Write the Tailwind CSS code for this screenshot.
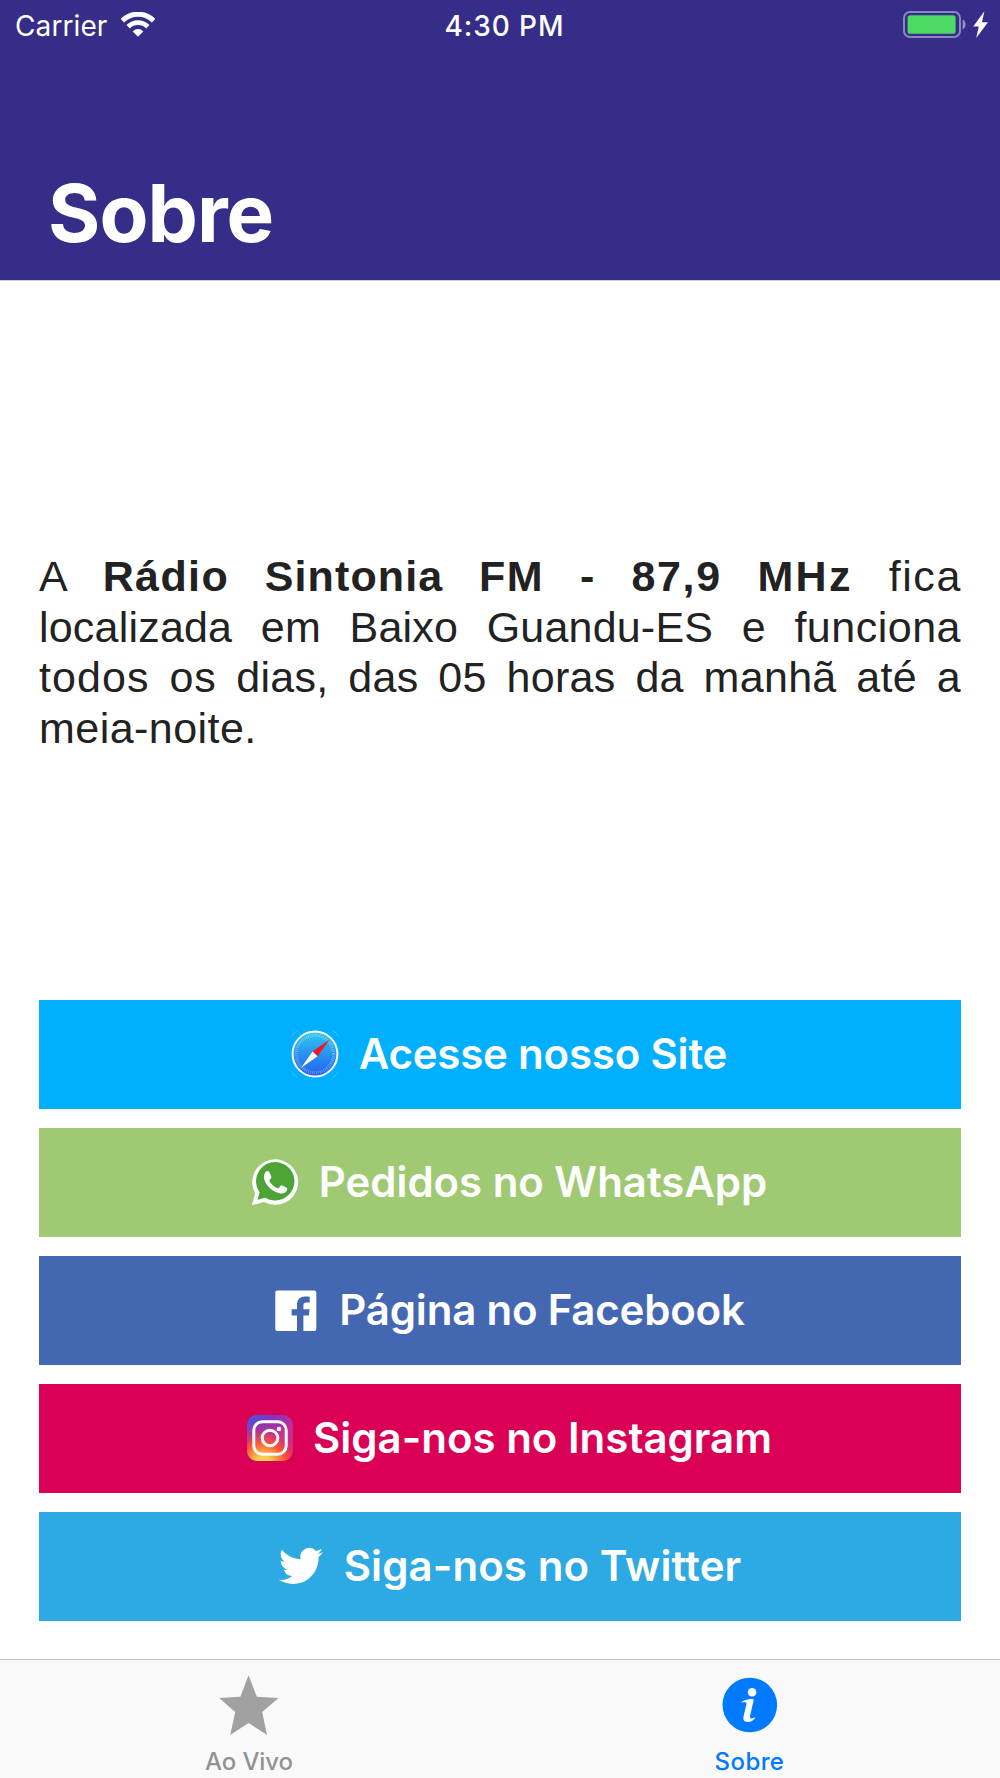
<!DOCTYPE html>
<html lang="pt-BR">
<head>
  <meta charset="UTF-8">
  <meta name="viewport" content="width=device-width, initial-scale=1.0">
  <script src="https://cdn.jsdelivr.net/npm/@tailwindcss/browser@4"></script>
  <title>Sobre</title>
</head>
<body class="flex flex-col w-[1000px] h-[1778px] overflow-hidden bg-white font-['Inter',sans-serif] select-none">

  <header class="flex flex-col justify-between h-[281px] pt-[6px] pb-[19px] bg-[#352d87] border-b border-[#cdcbe2] text-white shrink-0">
    <!-- Status bar -->
    <div class="grid grid-cols-3 items-center h-10 pl-[15px] pr-3 text-[28px] leading-10">
      <div class="flex items-center gap-[14px]">
        <span class="tracking-[0.1px]">Carrier</span>
        <svg class="w-[34px] h-[25px] -mt-[3px]" viewBox="0 0 34 25" fill="none" stroke="#fff">
          <path d="M1.4 8.6a22.2 22.2 0 0 1 31.2 0" stroke-width="5"/>
          <path d="M7.2 14.7a14 14 0 0 1 19.6 0" stroke-width="4.8"/>
          <path d="M11.7 19.4a7.2 7.2 0 0 1 10.6 0L17 24.8z" fill="#fff" stroke="none"/>
        </svg>
      </div>
      <span class="pl-[6px] text-center font-medium tracking-[0.9px]">4:30 PM</span>
      <div class="flex justify-end items-center gap-[7px] -mt-[3px]">
        <svg class="w-[63px] h-[27px]" viewBox="0 0 63 27">
          <rect x="1" y="1" width="56" height="25" rx="6" fill="none" stroke="#8b86bb" stroke-width="2"/>
          <rect x="4.600" y="4.200" width="48" height="18.600" rx="2.600" fill="#4cd964"/>
          <path d="M59.700 8.600c3.700 1.800 3.700 8 0 9.800z" fill="#9a96c3"/>
        </svg>
        <svg class="w-[15px] h-[27px]" viewBox="0 0 15 27" fill="#fff">
          <path d="M11.400.2.200 15.400h5.600L3.200 26.900 15 11.200H9z"/>
        </svg>
      </div>
    </div>
    <h1 class="pl-[48px] text-[80px] leading-[96px] font-bold tracking-[-1px]">Sobre</h1>
  </header>

  <main class="flex flex-col flex-1 px-[39px]">
    <div class="mt-[270px] h-[202px] text-[43px] leading-[50.5px] text-[#222] font-['Liberation_Sans',Arial,sans-serif] whitespace-nowrap">
      <p class="-mr-[1px] [text-align-last:justify] tracking-[1.6px]">A <b><span class="tracking-[1.4px]">Rádio</span> <span class="tracking-[1.1px]">Sintonia</span> FM - 87,9 <span class="tracking-[2.4px]">MHz</span></b> fica</p>
      <p class="[text-align-last:justify] tracking-[0.2px]">localizada em Baixo Guandu-ES e <span class="tracking-[0.5px]">funciona</span></p>
      <p class="[text-align-last:justify] tracking-[0.3px]"><span class="tracking-[1.1px]">todos</span> <span class="tracking-[0.8px]">os</span> dias, das 05 horas da manhã até a</p>
      <p class="tracking-[0.45px]">meia-noite.</p>
    </div>

    <div class="flex flex-col gap-[19px] mt-[247px] text-[42px] leading-[52px] font-semibold text-white">
      <a class="flex justify-center items-center gap-5 h-[109px] pl-[18px] pb-[2px] bg-[#00b0ff]">
        <svg class="size-12" viewBox="0 0 48 48">
          <defs>
            <linearGradient id="safari" x1="0" y1="0" x2="0" y2="1">
              <stop offset="0" stop-color="#2ccdf2"/>
              <stop offset=".5" stop-color="#2a92ee"/>
              <stop offset="1" stop-color="#2360ee"/>
            </linearGradient>
          </defs>
          <g fill="none" stroke="#fff" stroke-opacity=".3" stroke-width=".8">
            <path d="M.5 6.500q2-4 6-6M41.500.5q4 2 6 6M47.500 41.500q-2 4-6 6M6.500 47.500q-4-2-6-6"/>
          </g>
          <circle cx="24" cy="24" r="22.400" fill="url(#safari)" stroke="#fff" stroke-width="2"/>
          <circle cx="24" cy="24" r="18.600" fill="none" stroke="#fff" stroke-opacity=".4" stroke-width="3" stroke-dasharray=".7 1.250"/>
          <path d="M38.600 9.400 21.600 21.400l4.900 4.900z" fill="#f8141c"/>
          <path d="M10 38 21.600 21.400l4.900 4.900z" fill="#fff"/>
        </svg>
        <span class="tracking-[-0.2px]">Acesse nosso Site</span>
      </a>
      <a class="flex justify-center items-center gap-5 h-[109px] pl-[18px] pb-[2px] bg-[#9fc973]">
        <svg class="size-12" viewBox="0 0 48 48">
          <path d="M.9 47.200 4.200 35.300A23 22.700 0 1 1 13 43.900z" fill="#fff"/>
          <path d="M6.500 41.700 8.600 34.400A19.200 19.200 0 1 1 14.300 39.700z" fill="#4ca436"/>
          <path d="M14.400 14.300c1.200-1.500 3.200-1.600 4-.2l1.900 4.400c.4 1-.1 1.800-1.600 3.400-.5.6-.4 1.100.1 1.900 1.800 3 4.300 5 7.400 6.300.8.4 1.400.2 1.900-.4 1.700-2.100 2.100-2.600 3.100-2.200l4.200 2c1 .5 1 1 .8 2-.7 3.200-4 4.400-6.800 3.900-7.700-1.500-13.900-7.400-16-13.500-.9-2.800-.4-5.700 1-7.600z" fill="#fff"/>
        </svg>
        <span class="tracking-[-0.05px]">Pedidos no WhatsApp</span>
      </a>
      <a class="flex justify-center items-center gap-[19px] h-[109px] pl-[17px] pb-[2px] bg-[#4467b2]">
        <svg class="size-12" viewBox="0 0 48 48">
          <path d="M5.300 4.500h37a2 2 0 0 1 2 2v36.500a2 2 0 0 1-2 2H31.400V29.500h5.400l.8-6.200h-6.200v-3.800c0-2 .7-3 3.200-3h3.100V10.700c-1-.2-2.800-.3-4.600-.3-4.800 0-8.100 2.900-8.100 8.300v4.600h-5.400v6.200H25V45H5.300a2 2 0 0 1-2-2v-36.500a2 2 0 0 1 2-2z" fill="#fff"/>
        </svg>
        <span class="tracking-[-0.2px]">Página no Facebook</span>
      </a>
      <a class="flex justify-center items-center gap-[19px] h-[109px] pl-[18px] pb-[2px] bg-[#d90056]">
        <svg class="size-12" viewBox="0 0 48 48">
          <defs>
            <linearGradient id="insta-base" x1="0" y1="0" x2="1" y2="1">
              <stop offset="0" stop-color="#3f5fe0"/>
              <stop offset=".3" stop-color="#8035c0"/>
              <stop offset=".6" stop-color="#c32c98"/>
              <stop offset="1" stop-color="#e01f65"/>
            </linearGradient>
            <radialGradient id="insta-glow" cx=".35" cy="1.080" r=".95">
              <stop offset="0" stop-color="#ffe070"/>
              <stop offset=".2" stop-color="#fdc84f"/>
              <stop offset=".5" stop-color="#fb5a36"/>
              <stop offset=".75" stop-color="#e0336c" stop-opacity=".6"/>
              <stop offset="1" stop-color="#c0309a" stop-opacity="0"/>
            </radialGradient>
          </defs>
          <rect x="1" y="1" width="46" height="46" rx="10" fill="url(#insta-base)"/>
          <rect x="1" y="1" width="46" height="46" rx="10" fill="url(#insta-glow)"/>
          <g fill="none" stroke="#fff" stroke-width="3">
            <rect x="7.800" y="7.800" width="32.400" height="32.400" rx="8.500"/>
            <circle cx="24" cy="24" r="7.800"/>
          </g>
          <circle cx="33" cy="15" r="2.300" fill="#fff"/>
        </svg>
        <span>Siga-nos no Instagram</span>
      </a>
      <a class="flex justify-center items-center gap-[19px] h-[109px] pl-[18px] pb-[2px] bg-[#2da9e3]">
        <svg class="size-12" viewBox="0 0 48 48">
          <path transform="translate(1.900 1.900) scale(1.840)" d="M23.953 4.570a10 10 0 0 1-2.825.775 4.958 4.958 0 0 0 2.163-2.723c-.951.555-2.005.959-3.127 1.184a4.920 4.920 0 0 0-8.384 4.482C7.690 8.095 4.067 6.130 1.640 3.162a4.822 4.822 0 0 0-.666 2.475c0 1.710.87 3.213 2.188 4.096a4.904 4.904 0 0 1-2.228-.616v.06a4.923 4.923 0 0 0 3.946 4.827 4.996 4.996 0 0 1-2.212.085 4.936 4.936 0 0 0 4.604 3.417 9.867 9.867 0 0 1-6.102 2.105c-.39 0-.779-.023-1.170-.067a13.995 13.995 0 0 0 7.557 2.209c9.053 0 13.998-7.496 13.998-13.985 0-.21 0-.42-.015-.63A9.935 9.935 0 0 0 24 4.590z" fill="#fff"/>
        </svg>
        <span class="tracking-[0.1px]">Siga-nos no Twitter</span>
      </a>
    </div>
  </main>

  <!-- Tab bar -->
  <nav class="grid grid-cols-2 h-[119px] shrink-0 bg-[#f9f9f9] border-t border-[#c4c4c4] text-[24px] leading-7 font-medium">
    <a class="flex flex-col items-center gap-[11px] pt-[15px] pr-[2px] text-[#929292]">
      <svg class="w-[60px] h-[61px]" viewBox="0 0 60 61" fill="#a1a1a1">
        <path d="M29.500.3 37.900 21.800 59.500 23 43.200 37.100 48 59.900 29.500 48 11.200 59.900 16.200 37.100.3 23l21.100-1.200z"/>
      </svg>
      <span class="pt-[1px] tracking-[-0.1px]">Ao Vivo</span>
    </a>
    <a class="flex flex-col items-center gap-[11px] pt-[15px] pr-[1px] text-[#007aff]">
      <svg class="w-[60px] h-[61px]" viewBox="0 0 60 61">
        <circle cx="29.800" cy="30" r="27.300" fill="#007aff"/>
        <circle cx="32.100" cy="17.200" r="4.300" fill="#fff"/>
        <path d="M21.500 26.900c3-2 7.500-3.100 11.200-2.900.8.100 1.100.6.900 1.500L30.200 40.200c-.4 2-.1 3.300 1.200 3.300 1.300 0 2.500-.8 4.200-1.500-1.600 3.200-4.700 5-7.700 5-3.700 0-5.200-2-4.300-5.700l2.700-11.300c.5-2.100-.1-2.900-1.900-2.900-1 0-1.900.3-2.700.7z" fill="#fff"/>
      </svg>
      <span class="pt-[1px] tracking-[0.4px]">Sobre</span>
    </a>
  </nav>

</body>
</html>
